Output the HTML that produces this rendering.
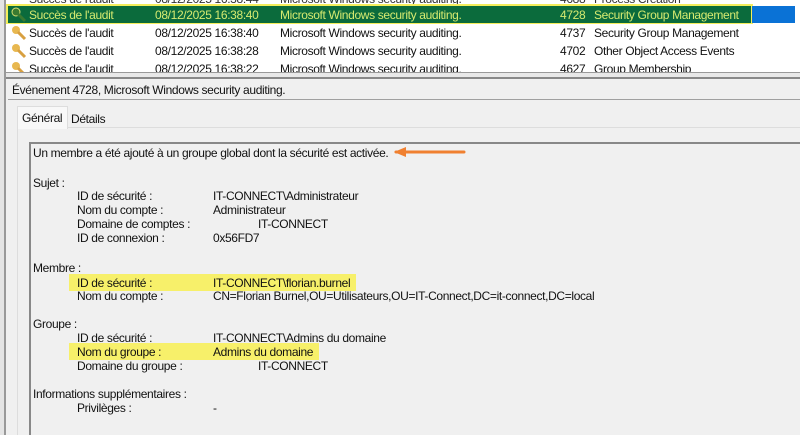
<!DOCTYPE html>
<html><head><meta charset="utf-8"><style>
body{margin:0;width:800px;height:435px;overflow:hidden;background:#f0f0f0;font-family:"Liberation Sans",sans-serif;font-size:12px;color:#111;position:relative}
.a{position:absolute;white-space:nowrap;line-height:14px;letter-spacing:-0.35px}
.list{position:absolute;left:0;top:0;width:800px;height:77px;background:#fff}
.key{position:absolute;left:11px;top:1px;width:16px;height:16px}
</style></head><body>
<div class="list">
<div class="a" style="left:29px;top:-8px;color:#333">Succès de l'audit</div>
<div class="a" style="left:155px;top:-8px;color:#333">08/12/2025 16:38:44</div>
<div class="a" style="left:280px;top:-8px;color:#333">Microsoft Windows security auditing.</div>
<div class="a" style="left:560px;top:-8px;color:#333">4688</div>
<div class="a" style="left:594px;top:-8px;color:#333">Process Creation</div>
<div style="position:absolute;left:5px;top:4px;width:748px;height:20px;background:#f4ee5c"></div>
<div style="position:absolute;left:8px;top:6px;width:743px;height:17px;background:#0b6b3c"></div>
<div style="position:absolute;left:752px;top:6px;width:43px;height:17px;background:#0a72d6"></div>
<svg class="key" style="top:7px" viewBox="0 0 16 16"><circle cx="5" cy="5" r="4" fill="#3a7a30" stroke="#d8e070" stroke-width="1"/><path d="M7 7 L14 14" stroke="#3a7a30" stroke-width="3"/></svg>
<div class="a" style="left:29px;top:8px;color:#d6ea70">Succès de l'audit</div>
<div class="a" style="left:155px;top:8px;color:#d6ea70">08/12/2025 16:38:40</div>
<div class="a" style="left:280px;top:8px;color:#d6ea70">Microsoft Windows security auditing.</div>
<div class="a" style="left:560px;top:8px;color:#d6ea70">4728</div>
<div class="a" style="left:594px;top:8px;color:#d6ea70">Security Group Management</div>
<svg class="key" style="top:25px" viewBox="0 0 16 16"><circle cx="5" cy="5" r="4" fill="#e8b850"/><path d="M7 7 L14 14" stroke="#d8a040" stroke-width="3"/></svg>
<div class="a" style="left:29px;top:26px">Succès de l'audit</div>
<div class="a" style="left:155px;top:26px">08/12/2025 16:38:40</div>
<div class="a" style="left:280px;top:26px">Microsoft Windows security auditing.</div>
<div class="a" style="left:560px;top:26px">4737</div>
<div class="a" style="left:594px;top:26px">Security Group Management</div>
<svg class="key" style="top:43px" viewBox="0 0 16 16"><circle cx="5" cy="5" r="4" fill="#e8b850"/><path d="M7 7 L14 14" stroke="#d8a040" stroke-width="3"/></svg>
<div class="a" style="left:29px;top:44px">Succès de l'audit</div>
<div class="a" style="left:155px;top:44px">08/12/2025 16:38:28</div>
<div class="a" style="left:280px;top:44px">Microsoft Windows security auditing.</div>
<div class="a" style="left:560px;top:44px">4702</div>
<div class="a" style="left:594px;top:44px">Other Object Access Events</div>
<svg class="key" style="top:61px" viewBox="0 0 16 16"><circle cx="5" cy="5" r="4" fill="#e8b850"/><path d="M7 7 L14 14" stroke="#d8a040" stroke-width="3"/></svg>
<div class="a" style="left:29px;top:62px">Succès de l'audit</div>
<div class="a" style="left:155px;top:62px">08/12/2025 16:38:22</div>
<div class="a" style="left:280px;top:62px">Microsoft Windows security auditing.</div>
<div class="a" style="left:560px;top:62px">4627</div>
<div class="a" style="left:594px;top:62px">Group Membership</div>
</div>
<div style="position:absolute;left:0;top:72px;width:800px;height:1px;background:#999"></div>
<div style="position:absolute;left:0;top:73px;width:800px;height:5px;background:#e8e8e8"></div>
<div style="position:absolute;left:0;top:77px;width:800px;height:2px;background:#888"></div>
<div style="position:absolute;left:4px;top:0;width:2px;height:435px;background:#999"></div>
<div style="position:absolute;left:0;top:0;width:4px;height:435px;background:#e4e4e4"></div>
<div class="a" style="left:12px;top:83px">Événement 4728, Microsoft Windows security auditing.</div>
<div style="position:absolute;left:8px;top:99px;width:792px;height:1px;background:#a0a0a0"></div>
<div style="position:absolute;left:17px;top:127px;width:783px;height:1px;background:#ddd"></div>
<div style="position:absolute;left:17px;top:106px;width:49px;height:22px;background:#f8f8f8;border:1px solid #ddd;border-bottom:none"></div>
<div class="a" style="left:22px;top:111px">Général</div>
<div class="a" style="left:71px;top:112px">Détails</div>
<div style="position:absolute;left:17px;top:127px;width:1px;height:308px;background:#ddd"></div>
<div style="position:absolute;left:29px;top:142px;width:771px;height:2px;background:#888"></div>
<div style="position:absolute;left:29px;top:142px;width:2px;height:293px;background:#888"></div>
<div style="position:absolute;left:69px;top:274px;width:287px;height:17px;background:#f7f06a"></div>
<div style="position:absolute;left:69px;top:343px;width:250px;height:17px;background:#f7f06a"></div>
<div class="a" style="left:33px;top:146px">Un membre a été ajouté à un groupe global dont la sécurité est activée.</div>
<svg style="position:absolute;left:392px;top:145px" width="76" height="14"><path d="M4 7 L72 7" stroke="#f08030" stroke-width="3" stroke-linecap="round"/><path d="M2 7 L14 2 L14 12 Z" fill="#f08030"/></svg>
<div class="a" style="left:33px;top:176px">Sujet :</div>
<div class="a" style="left:77px;top:189px">ID de sécurité :</div><div class="a" style="left:213px;top:189px">IT-CONNECT\Administrateur</div>
<div class="a" style="left:77px;top:203px">Nom du compte :</div><div class="a" style="left:213px;top:203px">Administrateur</div>
<div class="a" style="left:77px;top:217px">Domaine de comptes :</div><div class="a" style="left:258px;top:217px">IT-CONNECT</div>
<div class="a" style="left:77px;top:231px">ID de connexion :</div><div class="a" style="left:213px;top:231px">0x56FD7</div>
<div class="a" style="left:33px;top:261px">Membre :</div>
<div class="a" style="left:77px;top:276px">ID de sécurité :</div><div class="a" style="left:213px;top:276px">IT-CONNECT\florian.burnel</div>
<div class="a" style="left:77px;top:289px">Nom du compte :</div><div class="a" style="left:213px;top:289px">CN=Florian Burnel,OU=Utilisateurs,OU=IT-Connect,DC=it-connect,DC=local</div>
<div class="a" style="left:33px;top:317px">Groupe :</div>
<div class="a" style="left:77px;top:331px">ID de sécurité :</div><div class="a" style="left:213px;top:331px">IT-CONNECT\Admins du domaine</div>
<div class="a" style="left:77px;top:345px">Nom du groupe :</div><div class="a" style="left:213px;top:345px">Admins du domaine</div>
<div class="a" style="left:77px;top:359px">Domaine du groupe :</div><div class="a" style="left:258px;top:359px">IT-CONNECT</div>
<div class="a" style="left:33px;top:387px">Informations supplémentaires :</div>
<div class="a" style="left:77px;top:401px">Privilèges :</div><div class="a" style="left:213px;top:401px">-</div>
</body></html>
